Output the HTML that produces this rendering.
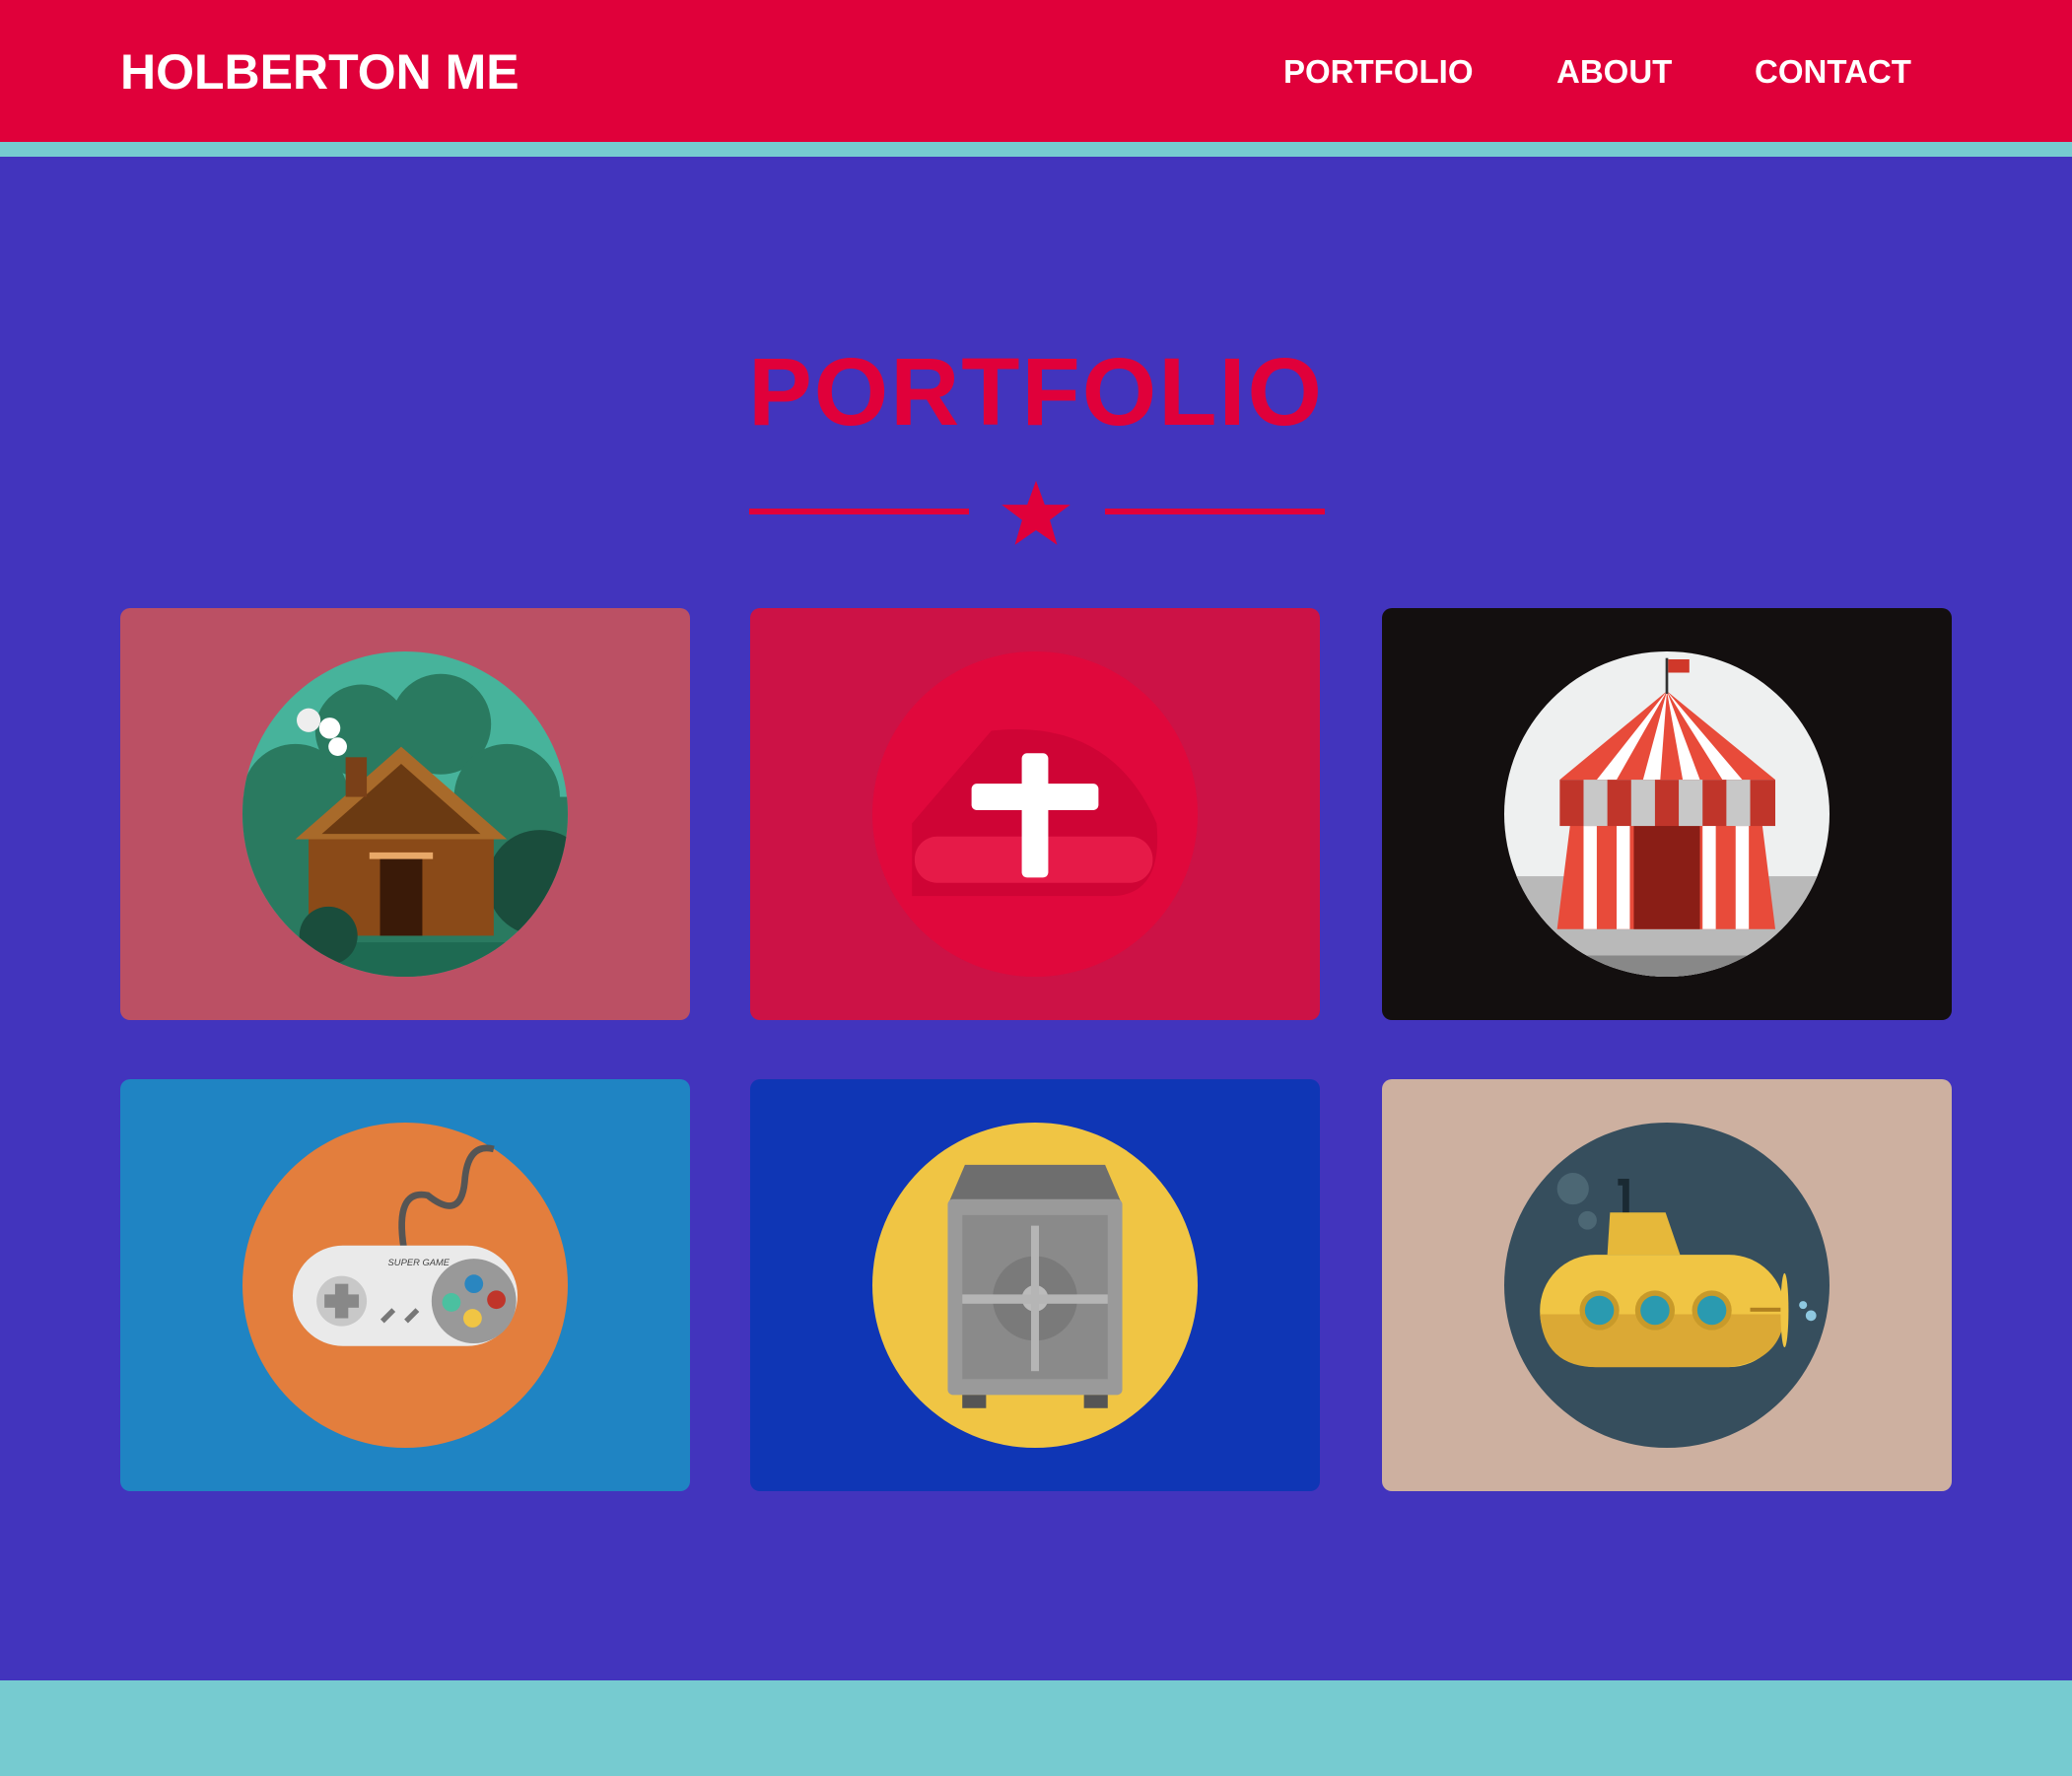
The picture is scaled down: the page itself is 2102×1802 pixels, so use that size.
<!DOCTYPE html>
<html><head><meta charset="utf-8">
<style>
*{margin:0;padding:0;box-sizing:border-box}
body{width:2102px;height:1802px;background:#4234bd;font-family:"Liberation Sans",sans-serif;position:relative;overflow:hidden}
.hdr{position:absolute;left:0;top:0;width:2102px;height:144px;background:#e0003a}
.strip{position:absolute;left:0;top:144px;width:2102px;height:15px;background:#76cbd0}
.logo{position:absolute;left:122px;top:44px;color:#fff;font-weight:bold;font-size:50px;letter-spacing:0px}
.nav{position:absolute;top:54px;color:#fff;font-weight:bold;font-size:33px}
.title{position:absolute;left:0;width:2102px;top:342px;text-align:center;color:#e0003a;font-weight:bold;font-size:97px;letter-spacing:2px}
.line{position:absolute;top:516px;height:6px;background:#e0003a}
.card{position:absolute;width:578px;height:418px;border-radius:10px}
.card svg{position:absolute;left:124px;top:44px;width:330px;height:330px}
.foot{position:absolute;left:0;top:1705px;width:2102px;height:97px;background:#76cbd0}
</style></head><body>
<div class="hdr"></div><div class="strip"></div>
<div class="logo">HOLBERTON ME</div>
<div class="nav" style="left:1302px">PORTFOLIO</div>
<div class="nav" style="left:1579px">ABOUT</div>
<div class="nav" style="left:1780px">CONTACT</div>
<div class="title">PORTFOLIO</div>
<div class="line" style="left:760px;width:223px"></div>
<div class="line" style="left:1121px;width:223px"></div>
<svg style="position:absolute;left:1014px;top:484px" width="74" height="74" viewBox="0 0 100 100"><polygon points="50,5 62,38 97,38 69,59 79,93 50,73 21,93 31,59 3,38 38,38" fill="#e0003a"/></svg>

<div class="card" style="left:122px;top:617px;background:#bb5064">
<svg viewBox="0 0 246 246"><defs><clipPath id="c1"><circle cx="123" cy="123" r="123"/></clipPath></defs>
<circle cx="123" cy="123" r="123" fill="#47b39b"/>
<g clip-path="url(#c1)">
<circle cx="40" cy="110" r="40" fill="#2a7a60"/><circle cx="90" cy="60" r="35" fill="#2a7a60"/><circle cx="150" cy="55" r="38" fill="#2a7a60"/><circle cx="200" cy="110" r="40" fill="#2a7a60"/>
<rect x="0" y="110" width="246" height="140" fill="#2a7a60"/>
<circle cx="225" cy="175" r="40" fill="#1a4d3c"/>
<rect x="50" y="140" width="140" height="75" fill="#8a4a18"/>
<polygon points="40,142 120,72 200,142" fill="#a86a2a"/>
<polygon points="60,138 120,85 180,138" fill="#6b3a12"/>
<rect x="104" y="155" width="32" height="60" fill="#3a1a08"/>
<rect x="96" y="152" width="48" height="5" fill="#e8a868"/>
<rect x="78" y="80" width="16" height="30" fill="#7a4018"/>
<circle cx="50" cy="52" r="9" fill="#eee"/><circle cx="66" cy="58" r="8" fill="#fff"/><circle cx="72" cy="72" r="7" fill="#fff"/>
<rect x="0" y="220" width="246" height="30" fill="#1e6a52"/>
<circle cx="65" cy="215" r="22" fill="#1a4d3c"/>
</g></svg></div>

<div class="card" style="left:761px;top:617px;background:#cc1246">
<svg viewBox="0 0 246 246"><circle cx="123" cy="123" r="123" fill="#e0083c"/>
<path d="M30 130 L90 60 Q180 50 215 130 Q220 185 180 185 L30 185 Z" fill="#cf0435"/>
<rect x="32" y="140" width="180" height="35" rx="17" fill="#e61a48"/>
<rect x="75" y="100" width="96" height="20" rx="4" fill="#fff"/>
<rect x="113" y="77" width="20" height="94" rx="4" fill="#fff"/>
</svg></div>

<div class="card" style="left:1402px;top:617px;background:#130f0f">
<svg viewBox="0 0 246 246"><defs><clipPath id="c3"><circle cx="123" cy="123" r="123"/></clipPath></defs>
<circle cx="123" cy="123" r="123" fill="#eef0f0"/>
<g clip-path="url(#c3)">
<rect x="0" y="170" width="246" height="80" fill="#b9b9b9"/>
<polygon points="60,230 246,230 246,250 80,250" fill="#888"/>
<polygon points="50,130 195,130 205,210 40,210" fill="#e84b3a"/>
<rect x="60" y="130" width="10" height="80" fill="#fff"/><rect x="85" y="130" width="10" height="80" fill="#fff"/><rect x="150" y="130" width="10" height="80" fill="#fff"/><rect x="175" y="130" width="10" height="80" fill="#fff"/>
<rect x="98" y="130" width="50" height="80" fill="#8a1e16"/>
<polygon points="123,30 42,97 205,97" fill="#e84b3a"/>
<polygon points="123,30 70,97 85,97" fill="#fff"/><polygon points="123,30 105,97 118,97" fill="#fff"/><polygon points="123,30 135,97 148,97" fill="#fff"/><polygon points="123,30 165,97 180,97" fill="#fff"/>
<rect x="42" y="97" width="163" height="35" fill="#c0352a"/>
<rect x="60" y="97" width="18" height="35" fill="#c8c8c8"/><rect x="96" y="97" width="18" height="35" fill="#c8c8c8"/><rect x="132" y="97" width="18" height="35" fill="#c8c8c8"/><rect x="168" y="97" width="18" height="35" fill="#c8c8c8"/>
<rect x="122" y="5" width="2" height="27" fill="#333"/><polygon points="124,6 140,6 140,16 124,16" fill="#d0382a"/>
</g></svg></div>

<div class="card" style="left:122px;top:1095px;background:#1f84c3">
<svg viewBox="0 0 246 246"><circle cx="123" cy="123" r="123" fill="#e37e3d"/>
<path d="M122 95 Q115 50 140 55 Q165 75 168 45 Q170 15 190 20" stroke="#555" stroke-width="5" fill="none"/>
<rect x="38" y="93" width="170" height="76" rx="38" fill="#eaeaea"/>
<circle cx="75" cy="135" r="19" fill="#c8c8c8"/>
<rect x="70" y="122" width="10" height="26" fill="#888"/><rect x="62" y="130" width="26" height="10" fill="#888"/>
<circle cx="175" cy="135" r="32" fill="#999"/>
<circle cx="158" cy="136" r="7" fill="#4bc0a0"/><circle cx="175" cy="122" r="7" fill="#2a86c0"/><circle cx="192" cy="134" r="7" fill="#c0352a"/><circle cx="174" cy="148" r="7" fill="#f0c544"/>
<rect x="108" y="140" width="4" height="12" fill="#777" transform="rotate(45 110 146)"/><rect x="126" y="140" width="4" height="12" fill="#777" transform="rotate(45 128 146)"/>
<text x="110" y="108" font-size="7" fill="#444" font-family="Liberation Sans" font-style="italic">SUPER GAME</text>
</svg></div>

<div class="card" style="left:761px;top:1095px;background:#0f36b5">
<svg viewBox="0 0 246 246"><circle cx="123" cy="123" r="123" fill="#f0c544"/>
<polygon points="70,32 176,32 188,60 58,60" fill="#6e6e6e"/>
<rect x="57" y="58" width="132" height="148" rx="4" fill="#9a9a9a"/>
<rect x="68" y="70" width="110" height="124" fill="#8a8a8a"/>
<circle cx="123" cy="133" r="32" fill="#7a7a7a"/><circle cx="123" cy="133" r="10" fill="#bbb"/>
<rect x="120" y="78" width="6" height="110" fill="#b5b5b5"/><rect x="68" y="130" width="110" height="7" fill="#b5b5b5"/>
<rect x="68" y="206" width="18" height="10" fill="#555"/><rect x="160" y="206" width="18" height="10" fill="#555"/>
</svg></div>

<div class="card" style="left:1402px;top:1095px;background:#cdb0a0">
<svg viewBox="0 0 246 246"><circle cx="123" cy="123" r="123" fill="#364e5d"/>
<circle cx="52" cy="50" r="12" fill="#4c6774"/><circle cx="63" cy="74" r="7" fill="#4c6774"/>
<path d="M92 70 L92 45 L86 45" stroke="#1a2a33" stroke-width="5" fill="none"/>
<polygon points="80,68 122,68 133,100 78,100" fill="#e6b83a"/>
<rect x="27" y="100" width="185" height="85" rx="42" fill="#f0c544"/>
<path d="M27 145 Q30 185 70 185 L170 185 Q210 180 212 145 Z" fill="#dba935"/>
<circle cx="72" cy="142" r="15" fill="#c89a2a"/><circle cx="72" cy="142" r="11" fill="#2a9ab0"/>
<circle cx="114" cy="142" r="15" fill="#c89a2a"/><circle cx="114" cy="142" r="11" fill="#2a9ab0"/>
<circle cx="157" cy="142" r="15" fill="#c89a2a"/><circle cx="157" cy="142" r="11" fill="#2a9ab0"/>
<rect x="186" y="140" width="24" height="3" fill="#b08020"/>
<ellipse cx="212" cy="142" rx="3" ry="28" fill="#f0c544"/>
<circle cx="226" cy="138" r="3" fill="#8ec8e0"/><circle cx="232" cy="146" r="4" fill="#8ec8e0"/>
</svg></div>

<div class="foot"></div>
</body></html>
